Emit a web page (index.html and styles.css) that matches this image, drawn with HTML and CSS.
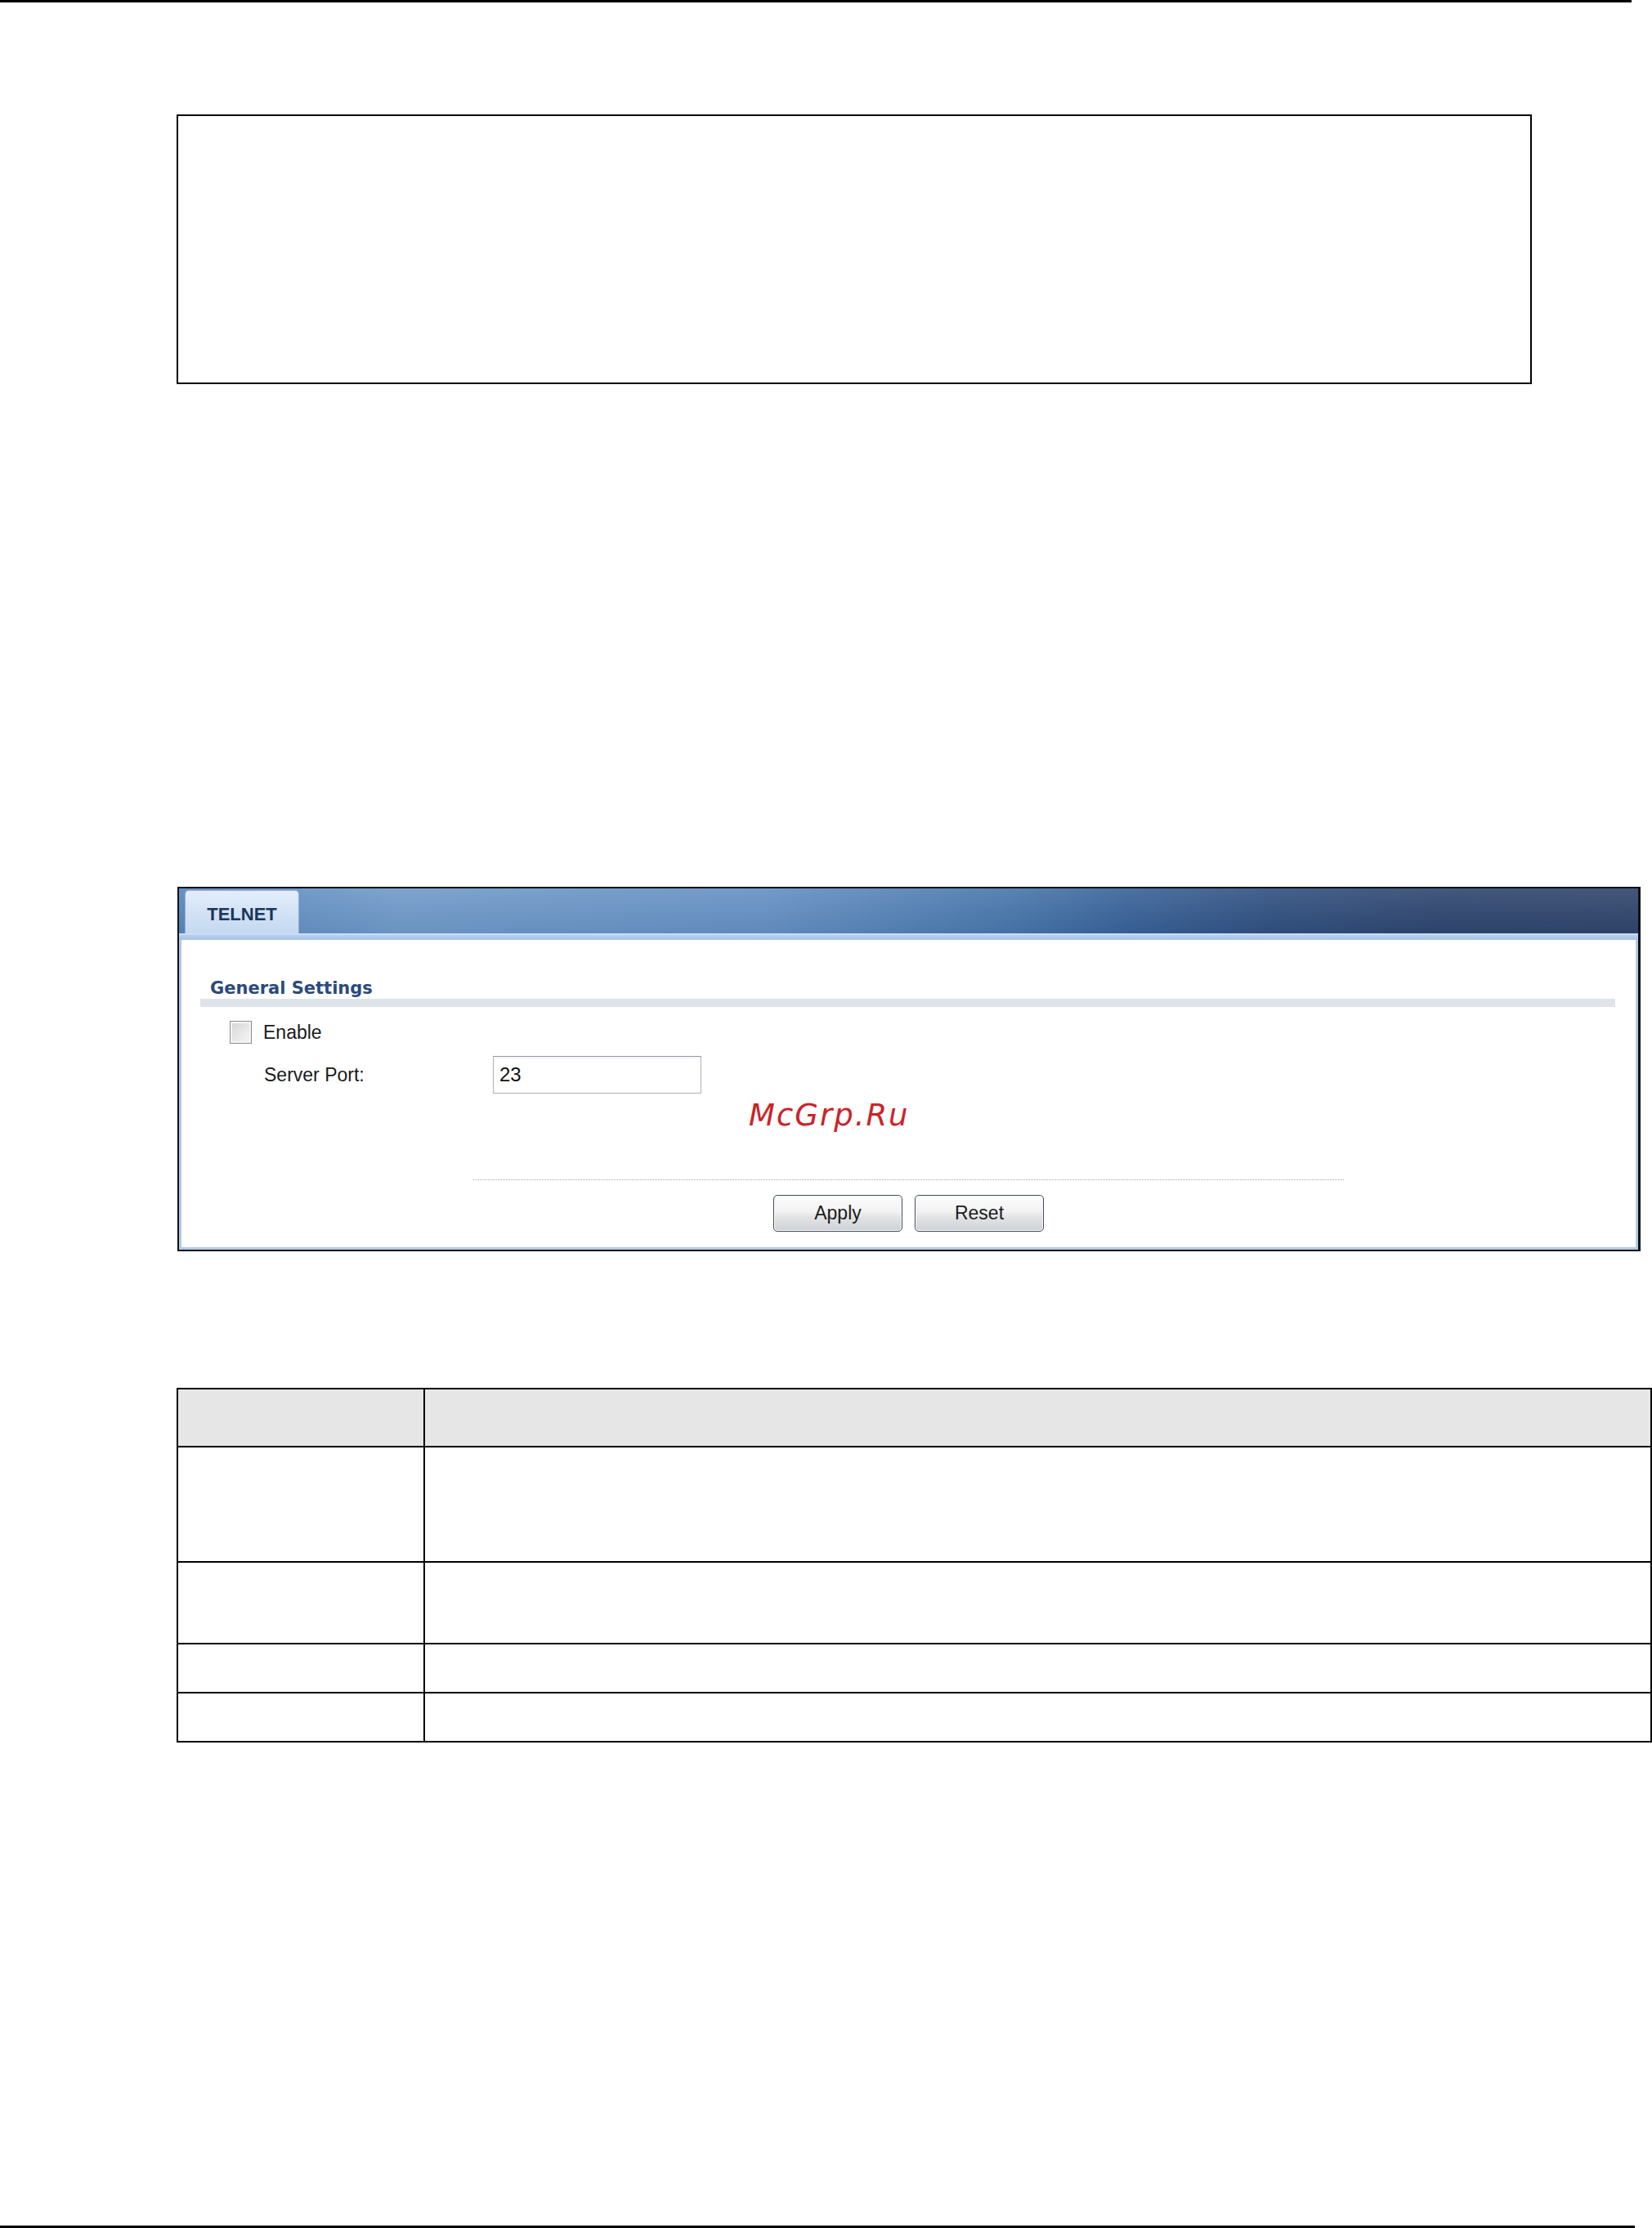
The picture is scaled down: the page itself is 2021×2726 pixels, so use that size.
FILE: index.html
```html
<!DOCTYPE html>
<html lang="en">
<head>
    <meta charset="UTF-8">
    <title>TELNET</title>
    <link rel="stylesheet" href="styles.css">
</head>
<body>

    <div class="rule rule-top"></div>

    <div class="note-box"></div>

    <div class="panel">
        <div class="panel-head">
            <div class="tab">TELNET</div>
        </div>
        <div class="panel-strip"></div>
        <div class="panel-body">
            <h2 class="section-title">General Settings</h2>

            <label class="check-row">
                <span class="checkbox"></span>
                <span>Enable</span>
            </label>

            <div class="field-row">
                <span class="field-label">Server Port:</span>
                <input class="text-input" type="text" value="23">
            </div>

            <div class="watermark">McGrp.Ru</div>

            <div class="dotted-line"></div>

            <div class="button-bar">
                <button class="btn">Apply</button>
                <button class="btn">Reset</button>
            </div>
        </div>
    </div>

    <table class="desc-table">
        <tr class="head-row"><td class="col-label"></td><td></td></tr>
        <tr class="row-a"><td class="col-label"></td><td></td></tr>
        <tr class="row-b"><td class="col-label"></td><td></td></tr>
        <tr class="row-c"><td class="col-label"></td><td></td></tr>
        <tr class="row-c"><td class="col-label"></td><td></td></tr>
    </table>

    <div class="rule rule-bottom"></div>

</body>
</html>
```

FILE: styles.css
```css
* {
    margin: 0;
    padding: 0;
    box-sizing: border-box;
}

html, body {
    overflow: hidden;
}

body {
    background-color: #fff;
    color: #1a1a1a;
    font-family: 'Liberation Sans', Arial, sans-serif;
    width: 2021px;
}

.rule {
    height: 3px;
    background-color: #000;
}

.rule-top {
    width: 1996px;
}

.rule-bottom {
    width: 2000px;
    margin-top: 591px;
}

.note-box {
    margin: 137px 0 0 216px;
    width: 1658px;
    height: 330px;
    border: 2px solid #000;
}

/* telnet screen */
.panel {
    margin: 615px 0 0 217px;
    width: 1790px;
    border: 2px solid #101216;
    border-right-width: 3px;
}

.panel-head {
    height: 55px;
    padding: 2px 0 0 7px;
    display: flex;
    background:
        linear-gradient(180deg, rgba(255, 255, 255, 0.10), rgba(0, 0, 0, 0.04)),
        linear-gradient(90deg, #5785bd 0%, #6f99c8 15%, #648fc3 40%, #4675aa 57%, #386198 65%, #2f4f7f 75%, #2e456f 86%, #2f446b 100%);
}

.tab {
    width: 140px;
    height: 53px;
    padding-top: 5px;
    display: flex;
    align-items: center;
    justify-content: center;
    background: linear-gradient(180deg, #e4eefa 0%, #d3e3f5 50%, #c4d8f0 100%);
    border: 1px solid #8fb0d8;
    border-bottom: none;
    border-radius: 5px 5px 0 0;
    color: #1b355e;
    font-size: 22px;
    font-weight: bold;
}

.panel-strip {
    height: 8px;
    background: linear-gradient(180deg, #d7e6f8 0%, #b2cdee 35%, #a5c3e8 100%);
}

.panel-body {
    background-color: #fff;
    border: 3px solid #b3c9e5;
    border-top: none;
    padding: 47px 0 19px;
}

.section-title {
    margin: 0 25px 0 23px;
    padding-left: 12px;
    font-family: 'DejaVu Sans', Verdana, sans-serif;
    font-size: 21px;
    line-height: 25px;
    font-weight: bold;
    color: #2b4a7e;
    border-bottom: 10px solid #dfe3ea;
}

.check-row {
    margin: 17px 0 0 59px;
    height: 28px;
    display: flex;
    align-items: center;
    gap: 14px;
    font-size: 23px;
}

.checkbox {
    width: 27px;
    height: 28px;
    border: 1px solid #8e8e8e;
    background: linear-gradient(135deg, #d6d6d6, #f6f6f6);
    box-shadow: inset 0 0 0 2px #f4f4f4;
}

.field-row {
    margin: 15px 0 0 101px;
    display: flex;
    align-items: center;
}

.field-label {
    width: 280px;
    font-size: 23px;
}

.text-input {
    width: 255px;
    height: 46px;
    padding: 0 7px;
    border: 1px solid #aeb2b8;
    border-top-color: #969ba2;
    box-shadow: inset 0 2px 3px rgba(0, 0, 0, 0.05);
    font-family: 'Liberation Sans', Arial, sans-serif;
    font-size: 24px;
    color: #111;
    outline: none;
}

.watermark {
    margin: 5px 0 0 694px;
    font-family: 'DejaVu Sans', Verdana, sans-serif;
    font-style: italic;
    font-size: 37px;
    line-height: 43px;
    letter-spacing: 2px;
    color: #cc2229;
}

.dotted-line {
    width: 1065px;
    height: 1px;
    margin: 57px auto 0;
    border-top: 1px dotted #a8a8a8;
}

.button-bar {
    margin-top: 18px;
    display: flex;
    justify-content: center;
    gap: 15px;
}

.btn {
    width: 158px;
    height: 45px;
    border: 1px solid #3f4a59;
    border-radius: 5px;
    background: linear-gradient(180deg, #fdfdfd 0%, #f2f2f2 45%, #e3e4e6 60%, #cfd1d5 100%);
    box-shadow: inset 0 0 0 1px #fff;
    font-family: 'Liberation Sans', Arial, sans-serif;
    font-size: 23px;
    color: #1c1c1c;
}

/* description table */
.desc-table {
    margin: 167px 0 0 216px;
    width: 1805px;
    table-layout: fixed;
    border-collapse: separate;
    border-spacing: 0;
    border-top: 2px solid #000;
    border-left: 2px solid #000;
}

.desc-table td {
    padding: 0;
    border-right: 2px solid #000;
    border-bottom: 2px solid #000;
}

.desc-table .col-label {
    width: 302px;
}

.head-row {
    height: 71px;
    background-color: #e6e6e6;
}

.row-a {
    height: 141px;
}

.row-b {
    height: 100px;
}

.row-c {
    height: 60px;
}
```
